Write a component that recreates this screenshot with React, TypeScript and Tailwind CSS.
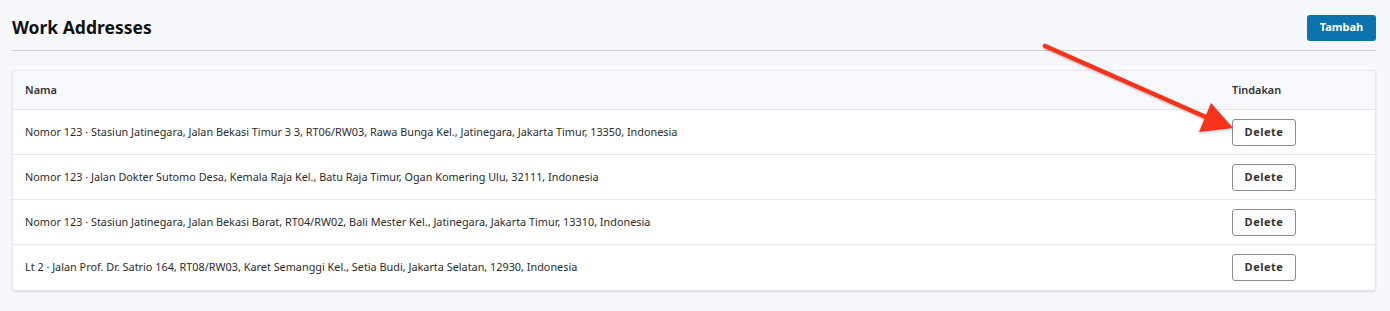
import React from "react";

const rows = [
  "Nomor 123 · Stasiun Jatinegara, Jalan Bekasi Timur 3 3, RT06/RW03, Rawa Bunga Kel., Jatinegara, Jakarta Timur, 13350, Indonesia",
  "Nomor 123 · Jalan Dokter Sutomo Desa, Kemala Raja Kel., Batu Raja Timur, Ogan Komering Ulu, 32111, Indonesia",
  "Nomor 123 · Stasiun Jatinegara, Jalan Bekasi Barat, RT04/RW02, Bali Mester Kel., Jatinegara, Jakarta Timur, 13310, Indonesia",
  "Lt 2 · Jalan Prof. Dr. Satrio 164, RT08/RW03, Karet Semanggi Kel., Setia Budi, Jakarta Selatan, 12930, Indonesia",
];

export default function App() {
  return (
    <div
      className="relative h-[311px] w-[1390px] overflow-hidden bg-[#f7f8fb] pl-3 pr-[14px] text-[#1f1f1f]"
      style={{ fontFamily: '"Noto Sans", "Open Sans", sans-serif' }}
    >
      {/* Judul + tombol tambah */}
      <div className="flex h-[51px] items-center justify-between border-b border-[#cfd0d4] pt-[5px]">
        <h1 className="text-[17.5px] font-bold text-[#111]">Work Addresses</h1>
        <button
          type="button"
          className="h-[26px] w-[69px] rounded-[3px] bg-[#0b72ad] text-[11px] font-bold text-white"
        >
          Tambah
        </button>
      </div>

      {/* Tabel alamat */}
      <div className="mt-[19px] rounded-[2px] border border-[#e6e7ea] bg-white shadow-[0_1px_2px_rgba(0,0,0,0.12)]">
        <div className="flex h-[39px] items-center border-b border-[#e6e7ea] bg-[#f8f9fc] px-3 text-[10.9px] font-semibold text-[#333]">
          <div className="flex-1">Nama</div>
          <div className="w-[131px]">Tindakan</div>
        </div>
        {rows.map((r, i) => (
          <div
            key={i}
            className={`flex h-[45px] items-center px-3 text-[10.85px] text-[#2b2b2b] ${
              i < rows.length - 1 ? "border-b border-[#e6e7ea]" : ""
            }`}
          >
            <div className="flex-1">{r}</div>
            <div className="w-[131px]">
              <button
                type="button"
                className="h-[27px] w-[64px] rounded-[3px] border border-[#8c8c8c] bg-white text-[11px] font-bold tracking-[0.5px] text-[#333]"
              >
                Delete
              </button>
            </div>
          </div>
        ))}
      </div>

      {/* Panah anotasi */}
      <svg
        className="pointer-events-none absolute left-0 top-0"
        width="1390"
        height="311"
        viewBox="0 0 1390 311"
      >
        <defs>
          <filter id="sh" x="-10%" y="-10%" width="120%" height="120%">
            <feDropShadow dx="0" dy="1" stdDeviation="1.2" floodColor="#000" floodOpacity="0.3" />
          </filter>
        </defs>
        <g filter="url(#sh)">
          <line x1="1045" y1="46" x2="1208" y2="118" stroke="#f9321a" strokeWidth="4.5" strokeLinecap="round" />
          <polygon points="1233,128 1211,103 1199,132" fill="#f9321a" />
        </g>
      </svg>
    </div>
  );
}
